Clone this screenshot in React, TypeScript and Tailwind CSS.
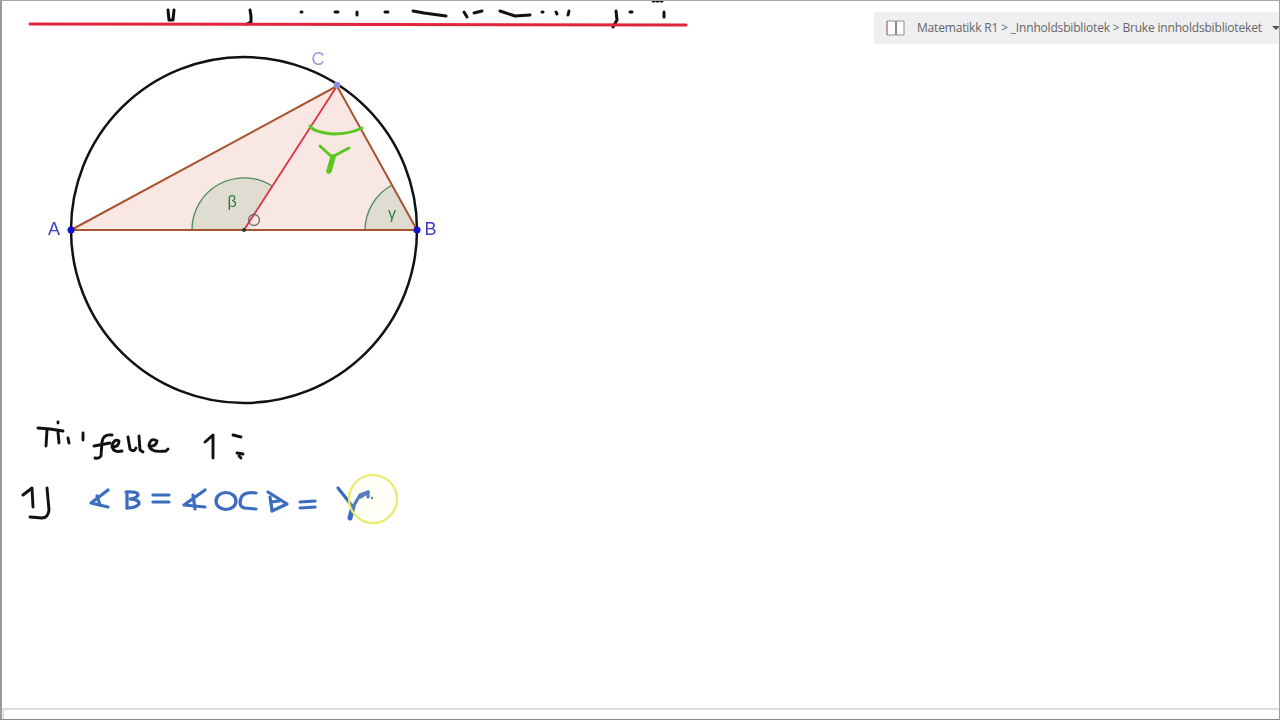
import React from 'react';

// freehand pen strokes from the lesson, in page coordinates
const BLACK_INK = [
  'M38 428 L50 429 L63 431', 'M47 430 L46 446', 'M58 432 L59 443', 'M58 422 L58 423',
  'M68 438 L69 443', 'M83 433 L83 440',
  'M112 435 Q103 434 102 442 L101 456 Q99 459 95 458', 'M94 446 L110 443',
  'M112 447 Q119 447 119 441 Q114 438 112 446 Q113 453 122 451',
  'M128 437 L130 449 Q134 453 136 448 M139 436 L140 450 L143 452',
  'M149 446 Q156 447 157 441 Q151 437 149 445 Q150 453 166 451 L168 449',
  'M205 442 L213 435 L213 458',
  'M233 435 L241 437', 'M237 453 L243 454 M239 456 L241 458',
  'M23 495 L32 488 L33 507', 'M47 488 L49 510 Q48 518 42 518 L30 517',
];

const BLUE_INK = [
  'M108 490 L91 503 L108 507', 'M97 496 L100 505',
  'M127 492 L127 508', 'M126 492 Q138 491 138 495 Q137 498 130 499 Q140 500 139 504 Q136 508 127 508',
  'M153 495 L169 495', 'M153 502 L169 502',
  'M205 490 L184 505 L205 507', 'M193 495 L195 509',
  'M256 493 Q244 491 241 498 Q238 507 245 508 L256 509',
  'M270 497 L272 510', 'M268 492 L287 504 L272 511', 'M271 502 L279 501',
  'M300 502 L315 501', 'M300 508 L315 507',
  'M338 488 L353 507', 'M353 507 L360 495 L368 492', 'M361 497 L368 492 L368 497',
];

const TOP_SCRAPS = [
  'M168 10 L169 20 L173 20 L174 10', 'M250 10 L251 16 L251 22 L247 24', 'M301 12 L302 12', 'M335 12 L338 12',
  'M357 12 L357 15', 'M385 12 L388 12', 'M413 11 L424 13 L446 16', 'M464 12 L467 17 M474 13 L482 11',
  'M500 11 L515 16 L530 15', 'M542 12 L543 12', 'M556 12 L557 14 M569 11 L568 15',
  'M616 11 L617 20 L613 27', 'M630 12 L632 12', 'M664 12 L664 17', 'M653 1 L654 1 M657 1 L658 1 M661 1 L662 1',
];

const App: React.FC = () => {
  return (
    <div className="h-screen w-screen overflow-hidden bg-white flex flex-col border-l-2 border-t border-r border-b border-l-[#9a9a9a] border-t-[#a8a8a8] border-r-[#a0a0a0] border-b-[#8a8a8a]">
      <div className="flex-1 flex min-h-0">
        <svg viewBox="2 1 700 540" className="w-[700px] h-[540px] shrink-0 blur-[0.5px]" fill="none" strokeLinecap="round" strokeLinejoin="round">
          {TOP_SCRAPS.map((d) => <path key={d} d={d} stroke="#111" strokeWidth="3" />)}
          <path d="M30 24 L686 25" stroke="#e0243c" strokeWidth="3" />

          <circle cx="244" cy="230" r="173" stroke="#111" strokeWidth="2.5" />
          <path d="M71 230 L417 230 L337 86 Z" fill="#f8e7e3" />
          <path d="M192 230 A52 52 0 0 1 272 186 L244 230 Z" fill="#dfdcd1" />
          <path d="M365 230 A52 52 0 0 1 392 185 L417 230 Z" fill="#dfdcd1" />
          <path d="M192 230 A52 52 0 0 1 272 186 M365 230 A52 52 0 0 1 392 185" stroke="#4f8a5b" strokeWidth="1.3" />
          <path d="M71 230 L417 230 L337 86 Z" stroke="#a8552f" strokeWidth="2" />
          <path d="M244 230 L337 86" stroke="#e2303f" strokeWidth="1.8" />
          <circle cx="254" cy="220" r="5.5" stroke="#666" strokeWidth="1.3" />
          <circle cx="244" cy="230" r="2" fill="#2c3a2c" />
          <circle cx="71" cy="230" r="3.5" fill="#1010d0" />
          <circle cx="417" cy="230" r="3.5" fill="#1010d0" />
          <circle cx="337" cy="85" r="3.2" fill="#8f8fe0" />

          <g fontFamily="'Liberation Sans', sans-serif" fontSize="18">
            <text x="48" y="235" fill="#3d3dc8">A</text>
            <text x="424.5" y="234.5" fill="#3d3dc8">B</text>
            <text x="311.5" y="64.5" fill="#9a9ae2">C</text>
            <text x="227.5" y="207" fill="#2f7d3c" fontSize="16">β</text>
            <text x="388" y="219" fill="#2f7d3c" fontSize="16">γ</text>
          </g>

          <path d="M310 126 Q313 132 333 134 Q350 134 362 128" stroke="#5cc722" strokeWidth="3" />
          <path d="M320 146 L332 157 L349 148" stroke="#5cc722" strokeWidth="3" />
          <path d="M333 157 L329 171" stroke="#5cc722" strokeWidth="5.5" />

          {BLACK_INK.map((d) => <path key={d} d={d} stroke="#111" strokeWidth="2.9" />)}
          {BLUE_INK.map((d) => <path key={d} d={d} stroke="#3a6cc0" strokeWidth="3.2" />)}
          <ellipse cx="226" cy="501" rx="10" ry="8.5" stroke="#3a6cc0" strokeWidth="3.2" />
          <path d="M353 507 L350 518" stroke="#3a6cc0" strokeWidth="5" />

          {/* pen cursor highlight sits over the ink */}
          <circle cx="373" cy="499" r="24" fill="#ffffc8" fillOpacity="0.12" stroke="#e9e96a" strokeWidth="2.2" />
          <circle cx="372" cy="498" r="1.2" fill="#777" />
        </svg>

        <div className="flex-1 flex justify-end items-start pt-[11px]">
          <div className="w-[405px] h-8 bg-[#efeef0] flex items-center pl-3 font-['Open_Sans',sans-serif] text-xs tracking-[-0.18px] text-[#666] whitespace-nowrap overflow-hidden">
            <svg viewBox="0 0 20 16" className="w-5 h-4 shrink-0" fill="#fff" stroke="#8c8c8c" strokeWidth="1">
              <path d="M1 1 H9.5 V15 H1 Z M10.5 1 H18 V15 H10.5 Z" />
              <path d="M1 1 V15" stroke="#c77" />
            </svg>
            <span className="ml-[11px]">Matematikk R1 &gt; _Innholdsbibliotek &gt; Bruke innholdsbiblioteket</span>
            <svg viewBox="0 0 8 4" className="ml-[10px] w-2 h-1 shrink-0" fill="#555">
              <path d="M0 0 H8 L4 4 Z" />
            </svg>
          </div>
        </div>
      </div>
      <div className="h-[11px] shrink-0 border-t-2 border-t-[#dcdcdc] pl-[1px]">
        <div className="h-full border-l border-l-[#cfcfcf]" />
      </div>
    </div>
  );
};

export default App;
